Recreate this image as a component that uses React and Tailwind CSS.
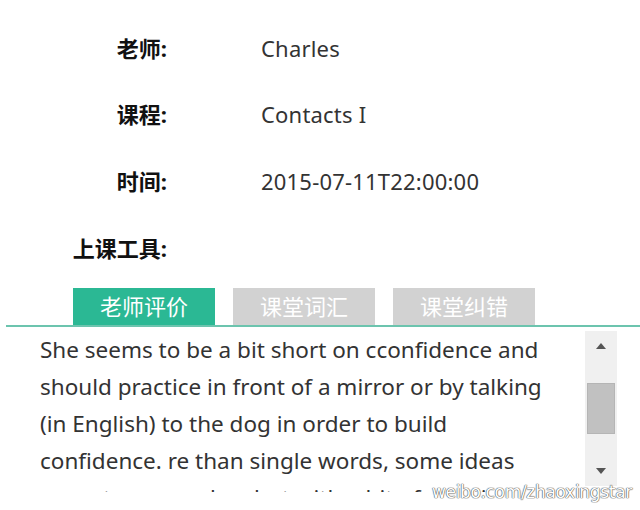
import React from 'react';

const rows = [
    { label: '老师:', value: 'Charles' },
    { label: '课程:', value: 'Contacts I' },
    { label: '时间:', value: '2015-07-11T22:00:00' },
    { label: '上课工具:', value: '' },
];

const tabs = ['老师评价', '课堂词汇', '课堂纠错'];

const font = { fontFamily: '"Noto Sans", "Noto Sans CJK SC", sans-serif' };

export default function App() {
    return (
        <div className="relative w-[640px] h-[510px] overflow-hidden bg-white" style={font}>
            {/* Info rows */}
            <div className="pt-[15px]">
                {rows.map((r) => (
                    <div key={r.label} className="flex items-center h-[66.67px]">
                        <div className="w-[167px] text-right font-bold text-[22px] text-[#111]">{r.label}</div>
                        <div className="ml-[94px] text-[22px] tracking-[0.2px] text-[#333]">{r.value}</div>
                    </div>
                ))}
            </div>

            {/* Tabs */}
            <div className="mt-[6px] flex gap-[18px] pl-[73px]">
                {tabs.map((t, i) => (
                    <div
                        key={t}
                        className={`w-[142px] h-[37px] flex items-center justify-center text-[22px] text-white ${i === 0 ? 'bg-[#2bb894]' : 'bg-[#d2d2d2]'}`}
                    >
                        {t}
                    </div>
                ))}
            </div>
            <div className="ml-[6px] h-[2px] bg-[#6cc4ae]" />

            {/* Comment box */}
            <div className="flex h-[165px] overflow-hidden">
                <div className="w-[552px] shrink-0 pl-[40px] pt-[4px] text-[22.5px] leading-[37px] text-[#333]">
                    She seems to be a bit short on cconfidence and should practice in front of a mirror or by talking (in English) to the dog in order to build confidence. re than single words, some ideas seem to escape her, but with a bit of practice she will be fine.
                </div>
                <div className="ml-[33px] mt-[4px] w-[32px] h-[155px] bg-[#f0f0f0] flex flex-col items-center">
                    <div className="h-[30px] flex items-center justify-center">
                        <div className="w-0 h-0 border-l-[5px] border-r-[5px] border-b-[6px] border-l-transparent border-r-transparent border-b-[#555]" />
                    </div>
                    <div className="mt-[22px] w-[28px] h-[51px] bg-[#c1c1c1] border border-[#b5b5b5]" />
                    <div className="mt-auto h-[30px] flex items-center justify-center">
                        <div className="w-0 h-0 border-l-[5px] border-r-[5px] border-t-[6px] border-l-transparent border-r-transparent border-t-[#555]" />
                    </div>
                </div>
            </div>

            {/* Watermark */}
            <div
                className="absolute right-[8px] bottom-[5px] text-[17px] text-white tracking-[-0.3px]"
                style={{ fontFamily: '"DejaVu Sans", sans-serif', textShadow: '0 0 1px #555, 0 0 1px #555, 0 0 1px #555' }}
            >
                weibo.com/zhaoxingstar
            </div>
        </div>
    );
}
